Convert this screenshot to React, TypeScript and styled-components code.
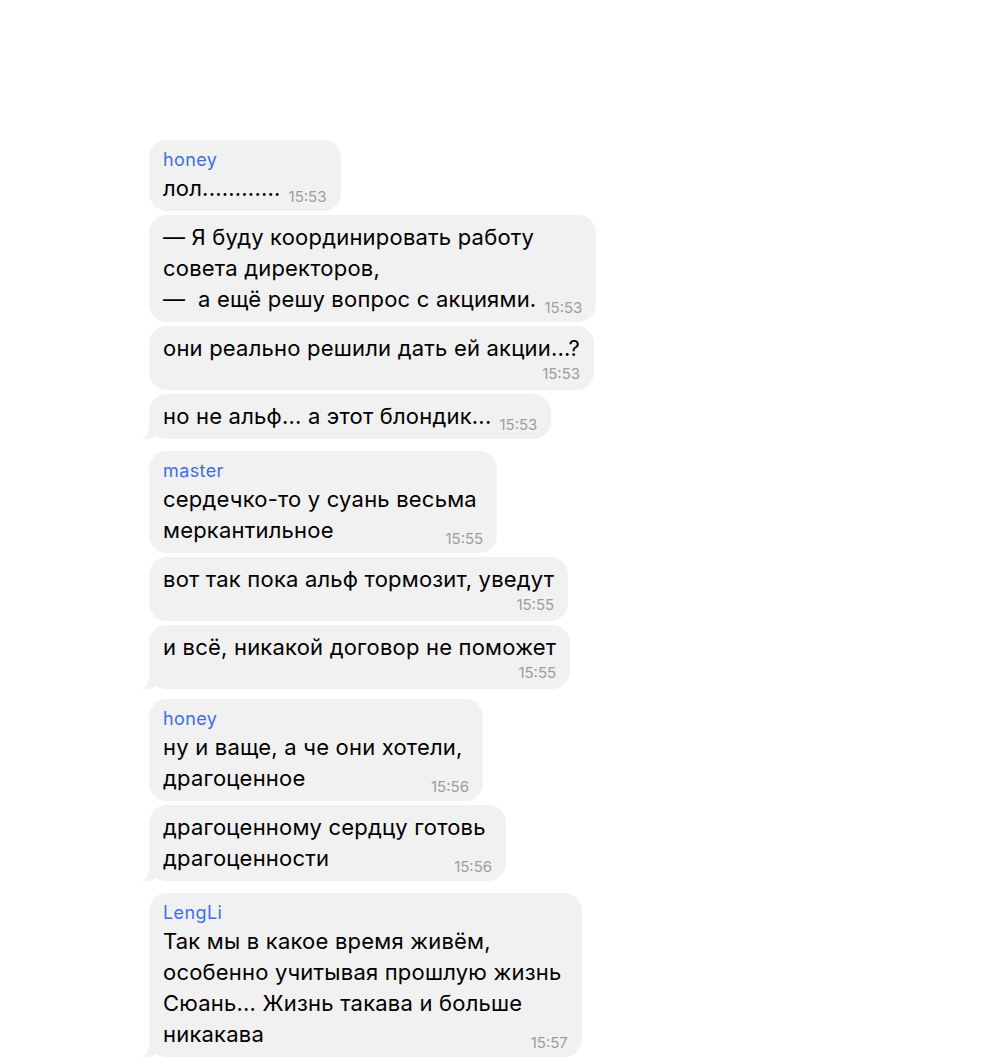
import React from 'react';
import styled, { createGlobalStyle } from 'styled-components';

const GlobalStyle = createGlobalStyle`
  html, body {
    margin: 0;
    padding: 0;
    background: #fff;
  }
  body {
    font-family: Inter, "Noto Sans", "Liberation Sans", sans-serif;
    -webkit-font-smoothing: antialiased;
  }
`;

const BUBBLE_BG = '#f1f1f2';

const Page = styled.div`
  display: flex;
  flex-direction: column;
  align-items: flex-start;
  padding: 140px 0 0 149px;
  min-height: 1064px;
  box-sizing: border-box;
`;

const Group = styled.div<{ $gap: number }>`
  display: flex;
  flex-direction: column;
  align-items: flex-start;
  gap: 4px;
  margin-top: ${p => p.$gap}px;
`;

const Bubble = styled.div<{ $tail: boolean }>`
  position: relative;
  z-index: 0;
  background: ${BUBBLE_BG};
  border-radius: 18px;
  padding: 7px 14px 7px 14px;
  color: #000;

  ${p => p.$tail && `
    &::before {
      content: "";
      position: absolute;
      z-index: -1;
      left: -7px;
      bottom: 0;
      width: 20px;
      height: 22px;
      background: ${BUBBLE_BG};
      border-bottom-right-radius: 16px 14px;
    }
    &::after {
      content: "";
      position: absolute;
      z-index: -1;
      left: -26px;
      bottom: 0;
      width: 26px;
      height: 22px;
      background: #fff;
      border-bottom-right-radius: 11px;
    }
  `}
`;

const Sender = styled.div`
  font-size: 18px;
  line-height: 27px;
  letter-spacing: 0.4px;
  margin-top: -1px;
  color: #3f6fe2;
`;

const Line = styled.div`
  font-size: 22px;
  line-height: 31px;
  letter-spacing: 0.2px;
  white-space: pre;
`;

const LastRow = styled.div`
  display: flex;
  align-items: flex-end;
  justify-content: space-between;
  gap: 8px;
`;

const Time = styled.span`
  font-size: 15px;
  line-height: 18px;
  color: #9d9d9f;
  white-space: nowrap;

  ${LastRow} & {
    margin-bottom: -2px;
  }
`;

const TimeRow = styled.div`
  display: flex;
  justify-content: flex-end;
  padding-top: 1px;
  line-height: 18px;
`;

type Msg = {
  lines: string[];
  time: string;
  timeBelow?: boolean;
};

type Chat = {
  sender: string;
  gap: number;
  messages: Msg[];
};

const chats: Chat[] = [
  {
    sender: 'honey',
    gap: 0,
    messages: [
      { lines: ['лол............'], time: '15:53' },
      {
        lines: ['— Я буду координировать работу ', 'совета директоров,', '—  а ещё решу вопрос с акциями.'],
        time: '15:53',
      },
      { lines: ['они реально решили дать ей акции...?'], time: '15:53', timeBelow: true },
      { lines: ['но не альф... а этот блондик...'], time: '15:53' },
    ],
  },
  {
    sender: 'master',
    gap: 12,
    messages: [
      { lines: ['сердечко-то у суань весьма ', 'меркантильное'], time: '15:55' },
      { lines: ['вот так пока альф тормозит, уведут'], time: '15:55', timeBelow: true },
      { lines: ['и всё, никакой договор не поможет'], time: '15:55', timeBelow: true },
    ],
  },
  {
    sender: 'honey',
    gap: 10,
    messages: [
      { lines: ['ну и ваще, а че они хотели, ', 'драгоценное'], time: '15:56' },
      { lines: ['драгоценному сердцу готовь ', 'драгоценности'], time: '15:56' },
    ],
  },
  {
    sender: 'LengLi',
    gap: 12,
    messages: [
      {
        lines: [
          'Так мы в какое время живём, ',
          'особенно учитывая прошлую жизнь ',
          'Сюань... Жизнь такава и больше ',
          'никакава',
        ],
        time: '15:57',
      },
    ],
  },
];

const Message = ({ msg, sender, tail }: { msg: Msg; sender?: string; tail: boolean }) => {
  const head = msg.lines.slice(0, -1);
  const last = msg.lines[msg.lines.length - 1];
  return (
    <Bubble $tail={tail}>
      {sender && <Sender>{sender}</Sender>}
      {head.map((l, i) => (
        <Line key={i}>{l}</Line>
      ))}
      {msg.timeBelow ? (
        <>
          <Line>{last}</Line>
          <TimeRow>
            <Time>{msg.time}</Time>
          </TimeRow>
        </>
      ) : (
        <LastRow>
          <Line>{last}</Line>
          <Time>{msg.time}</Time>
        </LastRow>
      )}
    </Bubble>
  );
};

export default function App() {
  return (
    <>
      <GlobalStyle />
      <Page>
        {chats.map((c, ci) => (
          <Group key={ci} $gap={c.gap}>
            {c.messages.map((m, mi) => (
              <Message
                key={mi}
                msg={m}
                sender={mi === 0 ? c.sender : undefined}
                tail={mi === c.messages.length - 1}
              />
            ))}
          </Group>
        ))}
      </Page>
    </>
  );
}
